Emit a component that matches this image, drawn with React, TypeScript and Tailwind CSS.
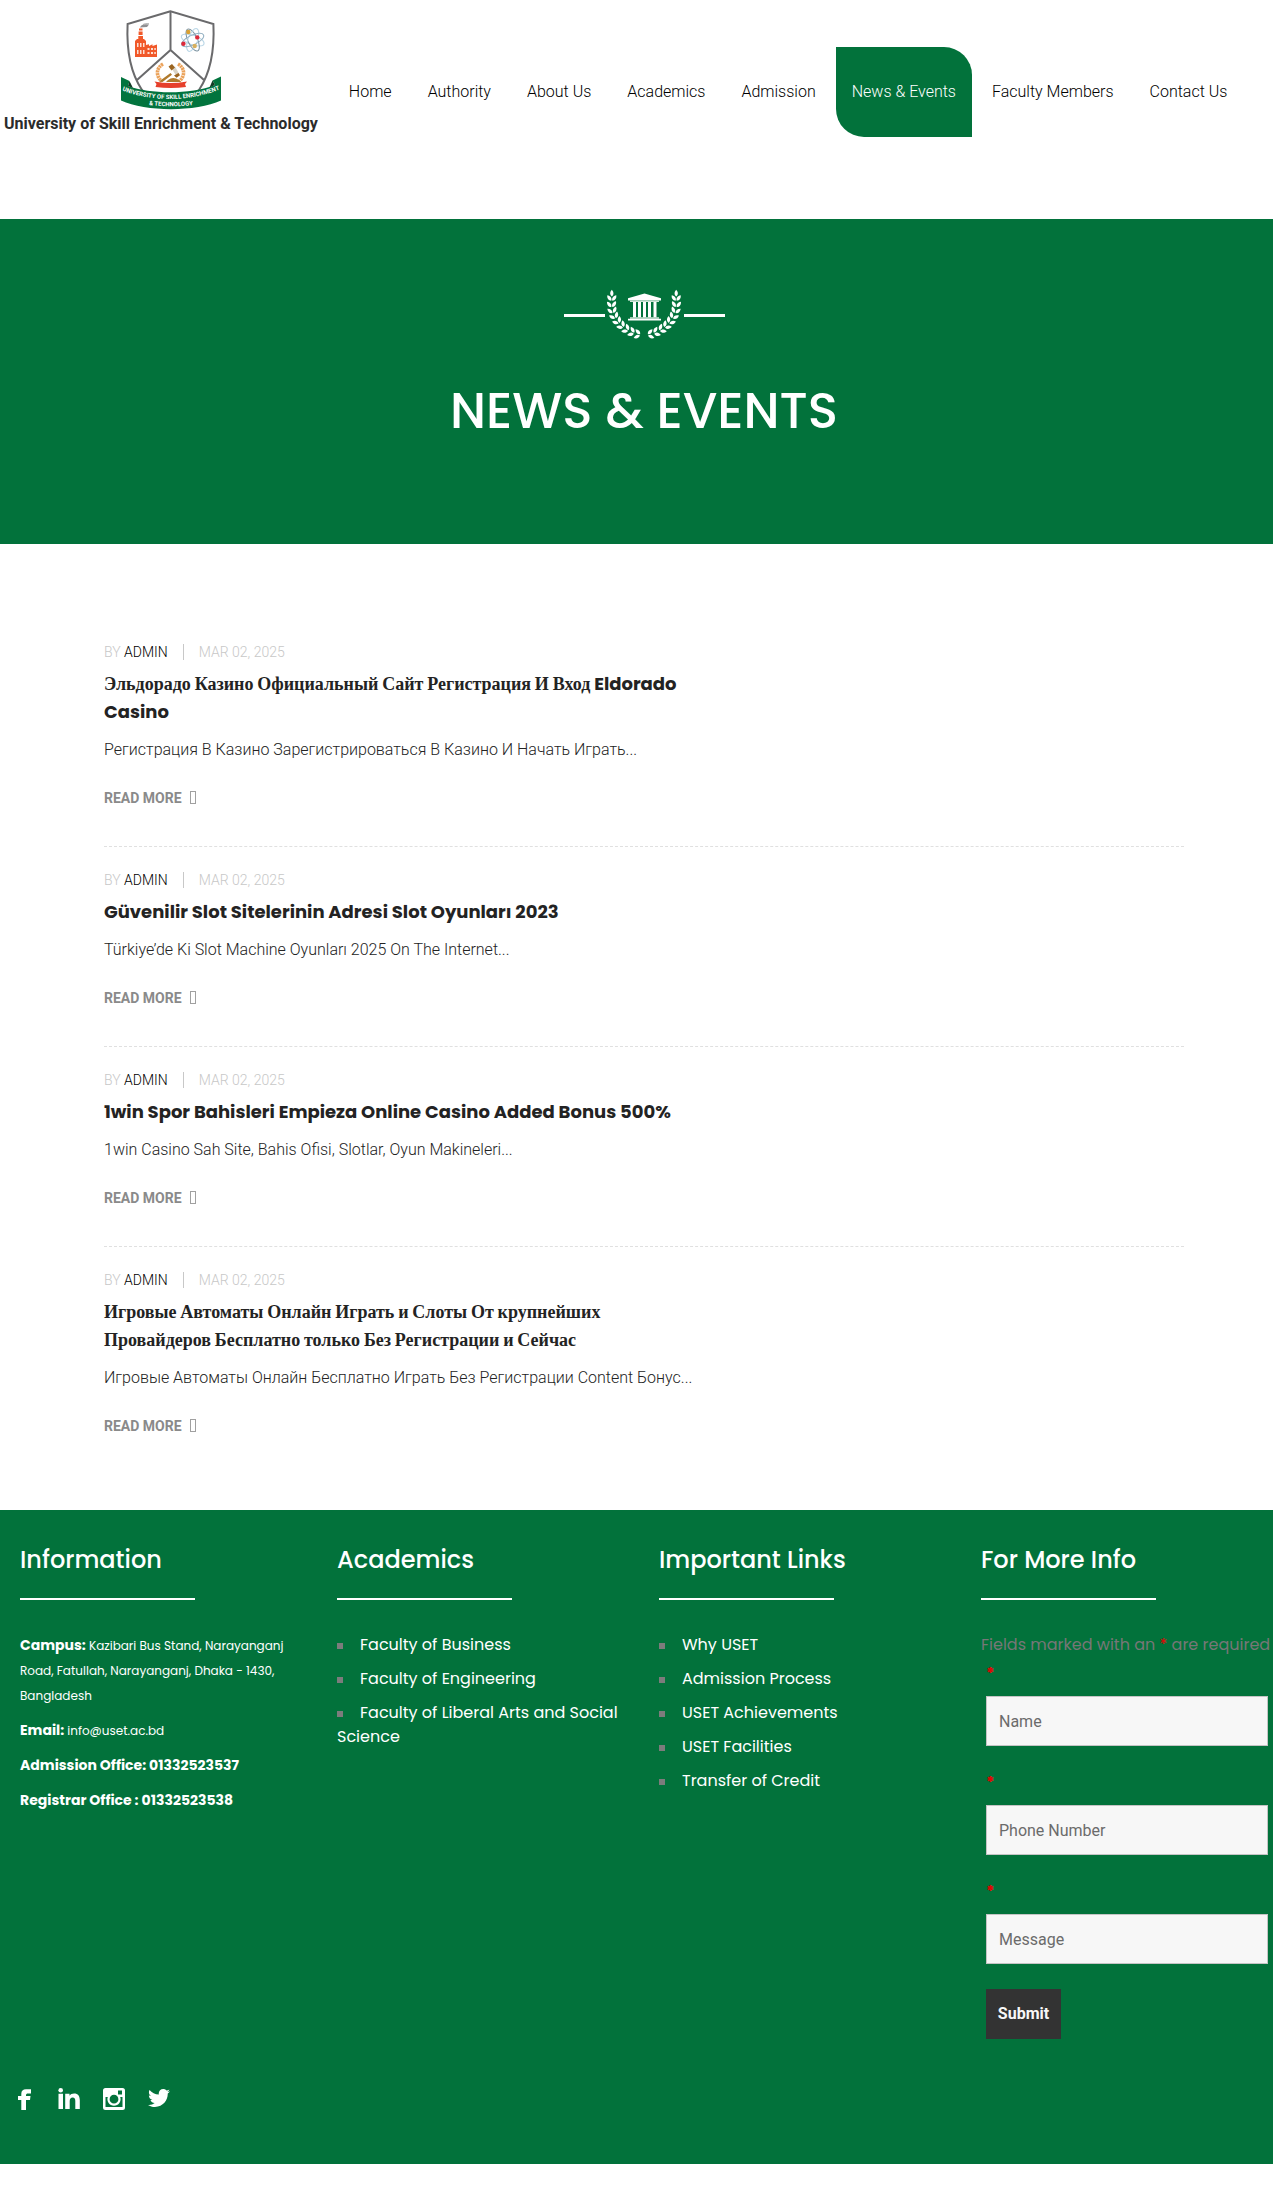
import { FaTwitter } from "react-icons/fa";

const POPPINS = "font-['Poppins','Inter',sans-serif]";

const NAV = ["Home", "Authority", "About Us", "Academics", "Admission", "News & Events", "Faculty Members", "Contact Us"];

const POSTS = [
  {
    title: "Эльдорадо Казино Официальный Сайт Регистрация И Вход Eldorado Casino",
    excerpt: "Регистрация В Казино Зарегистрироваться В Казино И Начать Играть...",
  },
  {
    title: "Güvenilir Slot Sitelerinin Adresi Slot Oyunları 2023",
    excerpt: "Türkiye’de Ki Slot Machine Oyunları 2025 On The Internet...",
  },
  {
    title: "1win Spor Bahisleri Empieza Online Casino Added Bonus 500%",
    excerpt: "1win Casino Sah Site, Bahis Ofisi, Slotlar, Oyun Makineleri...",
  },
  {
    title: "Игровые Автоматы Онлайн Играть и Слоты От крупнейших Провайдеров Бесплатно только Без Регистрации и Сейчас",
    excerpt: "Игровые Автоматы Онлайн Бесплатно Играть Без Регистрации Content Бонус...",
  },
];

const ACADEMICS = ["Faculty of Business", "Faculty of Engineering", "Faculty of Liberal Arts and Social Science"];
const LINKS = ["Why USET", "Admission Process", "USET Achievements", "USET Facilities", "Transfer of Credit"];

function Crest() {
  return (
    <svg viewBox="0 0 100 100" className="size-[100px]" role="img" aria-label="University crest">
      <path d="M49.500 1.200 6.600 14C5.500 37 9 62 21 80q12 12 28.500 17 16-5 28.500-17C90 62 93.500 37 92.400 14Z" fill="#fff" stroke="#6a6a6c" strokeWidth="2" />
      <path d="M49.500 1V40L16 70M49.500 40 83 70" fill="none" stroke="#6a6a6c" strokeWidth="2" />
      {/* factory */}
      <g fill="#f1592a">
        <path d="M18 18.500h3.500v2H18zM17.600 21.500h4v3.400h-4zM17.300 26h4.700v3h-4.700z" />
        <path d="M14 31l2-2h7l2 2v4l3-.8V36l3.500-1.800V36L36 34.500V47H14Z" />
      </g>
      <path d="M16 33h1.500v4H16zM19 33h1.500v4H19zM22 33h1.500v4H22zM16 40h1.500v4H16zM19 40h1.500v4H19zM22 40h1.500v4H22zM26.500 38h2v2h-2zM30 38h2v2h-2zM33.300 38h1.500v2h-1.500zM26.500 42h2v2h-2zM30 42h2v2h-2zM33.300 42h1.500v2h-1.500z" fill="#fde0d3" />
      <path d="M19 17.500q1.500-3.500 6-3.300l3 .3-2 2.500-4 .3Z" fill="#8f8f91" />
      <path d="M22 14.500q2-1.300 6-.7" stroke="#aaa" fill="none" />
      {/* atom */}
      <g fill="none" strokeWidth="1" transform="translate(71.700 30)">
        <ellipse rx="12" ry="4.800" transform="rotate(20)" stroke="#b9d6e6" />
        <ellipse rx="12" ry="4.800" transform="rotate(65)" stroke="#7c93a1" />
        <ellipse rx="12" ry="4.800" transform="rotate(110)" stroke="#b9d6e6" />
        <ellipse rx="12" ry="4.800" transform="rotate(155)" stroke="#93b0c2" />
      </g>
      <circle cx="67.300" cy="22" r="2.200" fill="#d9a032" />
      <circle cx="76.300" cy="27.400" r="2.200" fill="#dd2a3a" />
      <circle cx="62.400" cy="33.800" r="2.200" fill="#dd2a3a" />
      <circle cx="73.700" cy="36" r="2.200" fill="#d8b05c" />
      {/* wreath and gavel */}
      <path d="M42 54C35 58 34.500 66 41 71.500M57 54C64 58 64.500 66 58 71.500" fill="none" stroke="#eba25a" strokeWidth="3.600" strokeDasharray="2.200 .6" />
      <path d="M38 71.500 49.500 63l1.500 1.800L41.500 72ZM47 70q5-4 11 0l2 2H45Z" fill="#b07a2c" />
      <path d="m50.500 58.500 3.500-2 4 7-2.500 2.500Z" fill="#d9d3c7" />
      <path d="m47.500 56.500 3.500-2.500 3 3.500-3.500 3ZM53 65.500l4.500-2.500 1.500 2.200-3.500 2.500Z" fill="#9b6420" />
      <path d="M33.500 71.500q16 3 32.500 0l-2 2.500 1 3q-15 2-30.500 0l1-3Z" fill="#e6402c" />
      {/* ribbon */}
      <path d="M0 67 8.500 71 7 76C30 84.500 70 84.500 94 75l-2.500-4.500L100 66.500V90.500C75 102 25 102 0 90.500Z" fill="#02743e" />
      <path d="M8.500 71 7 76l5 2ZM91.500 70.500 94 75l-5.500 2.500Z" fill="#123c26" />
      <path id="crest-name" d="M1 80.500Q50 98 99 79.500" fill="none" />
      <path id="crest-name-end" d="M20 94Q50 98.500 80 94" fill="none" />
      <g fill="#fff" textAnchor="middle" className="font-['Roboto',sans-serif] font-bold">
        <text fontSize="6"><textPath href="#crest-name" startOffset="50%">UNIVERSITY OF SKILL ENRICHMENT</textPath></text>
        <text fontSize="6"><textPath href="#crest-name-end" startOffset="50%">&amp; TECHNOLOGY</textPath></text>
      </g>
    </svg>
  );
}

const LEAVES: [number, number, number][] = [
  [47.8, 12.8, 0],
  [47.8, 19, -3],
  [49, 25, -14],
  [51.5, 30.4, -26],
  [55, 35.2, -36],
  [59.3, 39.3, -46],
  [64.3, 42.6, -56],
  [70, 45.2, -66],
  [76, 46.8, -78],
];
const LEAF = "M0 0C-2.300-1.800-2.100-4.500 0-6.800 2.100-4.500 2.300-1.800 0 0Z";

function Laurel() {
  return (
    <g>
      <path d={LEAF} transform="translate(47.800 8.500)" />
      {LEAVES.map(([x, y, a]) => (
        <g key={x + "-" + y} transform={`translate(${x} ${y}) rotate(${a})`}>
          <path d={LEAF} transform="translate(-.5 0) rotate(-36)" />
          <path d={LEAF} transform="translate(.5 0) rotate(36)" />
        </g>
      ))}
    </g>
  );
}

function HeroMark() {
  return (
    <svg viewBox="0 0 161 52" className="h-[52px] w-[161px]" fill="#fff" aria-hidden="true">
      <path d="M0 26h41v3H0zM120 26h41v3h-41z" />
      <Laurel />
      <g transform="translate(160 0) scale(-1 1)">
        <Laurel />
      </g>
      <path d="M80.500 5.500 64 10.200v2.200h33v-2.200Z" />
      <path d="M66 12.400h29V14H66zM66 29.300h29v1.400H66z" fill="#cfe5d8" />
      <path d="M69 14h3v15.300h-3zM74 14h3v15.300h-3zM79 14h3v15.300h-3zM84 14h3v15.300h-3zM89.500 14h3v15.300h-3zM64 30.700h33v1.800H64z" />
    </svg>
  );
}

function FooterHeading({ children }: { children: string }) {
  return (
    <>
      <h2 className={`${POPPINS} text-2xl leading-9 font-medium`}>{children}</h2>
      <div className="mt-5 mb-[33px] h-[2px] w-[175px] bg-white" />
    </>
  );
}

function LinkList({ items }: { items: string[] }) {
  return (
    <ul className="space-y-[10px] text-base">
      {items.map((item) => (
        <li key={item}>
          <span className="mr-[17px] inline-block size-[6px] bg-[#7c7c7c] align-middle" />
          <a href="#">{item}</a>
        </li>
      ))}
    </ul>
  );
}

function Field({ id, label }: { id: string; label: string }) {
  return (
    <div className="mb-[25px]">
      <label htmlFor={id} aria-label={label} className="block h-[34px] text-base leading-6 font-bold text-[#e80000]">
        *
      </label>
      <input
        id={id}
        placeholder={label}
        className="block h-[50px] w-full border border-[#c4c4c4] bg-[#f7f7f7] px-3 font-['Roboto',sans-serif] text-base placeholder:text-[#6b6b6b]"
      />
    </div>
  );
}

export default function App() {
  return (
    <div className="bg-white font-['Roboto',sans-serif] text-[#232323]">
      <header className="flex h-[219px] items-start">
        <a href="#" className="flex shrink-0 flex-col items-center pt-[10px] pl-1">
          <div className="ml-5">
            <Crest />
          </div>
          <span className="text-base leading-7 font-bold whitespace-nowrap text-[#2b2b2b]">University of Skill Enrichment &amp; Technology</span>
        </a>
        <nav className="mt-[47px] ml-[15px] flex gap-1 text-base font-light text-black">
          {NAV.map((item) => (
            <a
              key={item}
              href="#"
              className={
                item === "News & Events"
                  ? "rounded-tr-[28px] rounded-bl-[28px] bg-[#02723b] px-4 leading-[90px] whitespace-nowrap text-white"
                  : "px-4 leading-[90px] whitespace-nowrap"
              }
            >
              {item}
            </a>
          ))}
        </nav>
      </header>

      <section className="flex h-[325px] flex-col items-center bg-[#02723b] pt-[69px] pr-[89px] pl-[104px] text-white">
        <HeroMark />
        <h1 className={`${POPPINS} mt-[33px] text-[50px] leading-[75px] font-medium`}>NEWS &amp; EVENTS</h1>
      </section>

      <main className="pt-[75px] pr-[89px] pb-9 pl-[104px]">
        {POSTS.map((post) => (
          <article key={post.excerpt} className="border-b border-dashed border-[#e0e0e0] pt-[23px] pb-[38px] last:border-b-0">
            <div className="flex h-5 items-center text-sm leading-5 font-light text-[#c8c8c8]">
              <span>
                BY <a href="#" className="text-black">ADMIN</a>
              </span>
              <span className="mr-[15px] ml-[15px] h-4 w-px bg-[#c8c8c8]" />
              <time dateTime="2025-03-02">MAR 02, 2025</time>
            </div>
            <h2 className="mt-2 max-w-[600px] font-['Poppins','Liberation_Serif',serif] text-lg leading-7 font-bold">
              <a href="#">{post.title}</a>
            </h2>
            <p className="mt-3 text-base leading-6 font-light">{post.excerpt}</p>
            <a href="#" className="mt-[26px] flex h-5 items-center gap-2 text-sm leading-5 font-bold text-[#8a8a8a]">
              READ MORE
              <span className="mb-[2px] h-[13px] w-[6px] border border-[#a0a0a0]" />
            </a>
          </article>
        ))}
      </main>

      <footer className={`${POPPINS} mb-6 bg-[#02723b] pt-8 pl-5 leading-6 text-white`}>
        <div className="grid grid-cols-[317fr_322fr_322fr_292fr]">
          <section>
            <FooterHeading>Information</FooterHeading>
            <div className="max-w-[280px] space-y-[10px] text-xs leading-[25px]">
              <p>
                <b className="text-sm leading-[25px]">Campus:</b> Kazibari Bus Stand, Narayanganj Road, Fatullah, Narayanganj, Dhaka - 1430, Bangladesh
              </p>
              <p>
                <b className="text-sm leading-[25px]">Email:</b> info@uset.ac.bd
              </p>
              <p className="text-sm leading-[25px] font-bold">Admission Office: 01332523537</p>
              <p className="text-sm leading-[25px] font-bold">Registrar Office : 01332523538</p>
            </div>
          </section>
          <section className="pr-6">
            <FooterHeading>Academics</FooterHeading>
            <LinkList items={ACADEMICS} />
          </section>
          <section>
            <FooterHeading>Important Links</FooterHeading>
            <LinkList items={LINKS} />
          </section>
          <section>
            <FooterHeading>For More Info</FooterHeading>
            <form>
              <p className="text-base leading-6 whitespace-nowrap text-[#777]">
                Fields marked with an <span className="text-[#e80000]">*</span> are required
              </p>
              <div className="mt-[5px] px-[5px]">
                <Field id="name" label="Name" />
                <Field id="phone" label="Phone Number" />
                <Field id="message" label="Message" />
                <button type="button" className="h-[50px] w-[75px] bg-[#333] font-['Roboto',sans-serif] text-base font-bold text-[#f7f7f7]">
                  Submit
                </button>
              </div>
            </form>
          </section>
        </div>
        <div className="-ml-[7px] flex h-[125px] items-start gap-[23px] pt-12">
          <a href="#" aria-label="Facebook" className="flex w-[22px] justify-center pt-[2px]">
            <svg viewBox="0 0 13 21" className="h-[21px] w-[13px]" fill="#fff">
              <path d="M3.300 21V11H0V7h3.300V5C3.300 1.800 5 .3 8 .3h5v4.200h-3C8.600 4.500 8 5 8 6.500V7h4.500L12 11H8v10Z" />
            </svg>
          </a>
          <a href="#" aria-label="LinkedIn" className="pt-px">
            <svg viewBox="0 0 22 21" className="h-[21px] w-[22px]" fill="#fff">
              <circle cx="2.700" cy="2.300" r="2.300" />
              <path d="M.5 5.700H5V21H.5ZM7.200 5.700h4.300v2c1-1.600 2.600-2.300 4.600-2.300 4 0 5.700 2.600 5.700 6.600v9h-4.500v-8c0-2.200-.7-3.500-2.600-3.500-2 0-3 1.400-3 3.500v8H7.200Z" />
            </svg>
          </a>
          <a href="#" aria-label="Instagram" className="pt-px">
            <svg viewBox="0 0 22 22" className="size-[22px]" fill="#fff" fillRule="evenodd">
              <path d="M2.500 0h17A2.500 2.500 0 0 1 22 2.500v17a2.500 2.500 0 0 1-2.500 2.500h-17A2.500 2.500 0 0 1 0 19.500v-17A2.500 2.500 0 0 1 2.500 0ZM15 2.500v4h4v-4ZM2.500 9v10h17V9h-2.300a6.600 6.600 0 1 1-12.400 0ZM11 6.800a4.400 4.400 0 1 0 0 8.800 4.400 4.400 0 0 0 0-8.800Z" />
            </svg>
          </a>
          <a href="#" aria-label="Twitter">
            <FaTwitter size={22} />
          </a>
        </div>
      </footer>
    </div>
  );
}
